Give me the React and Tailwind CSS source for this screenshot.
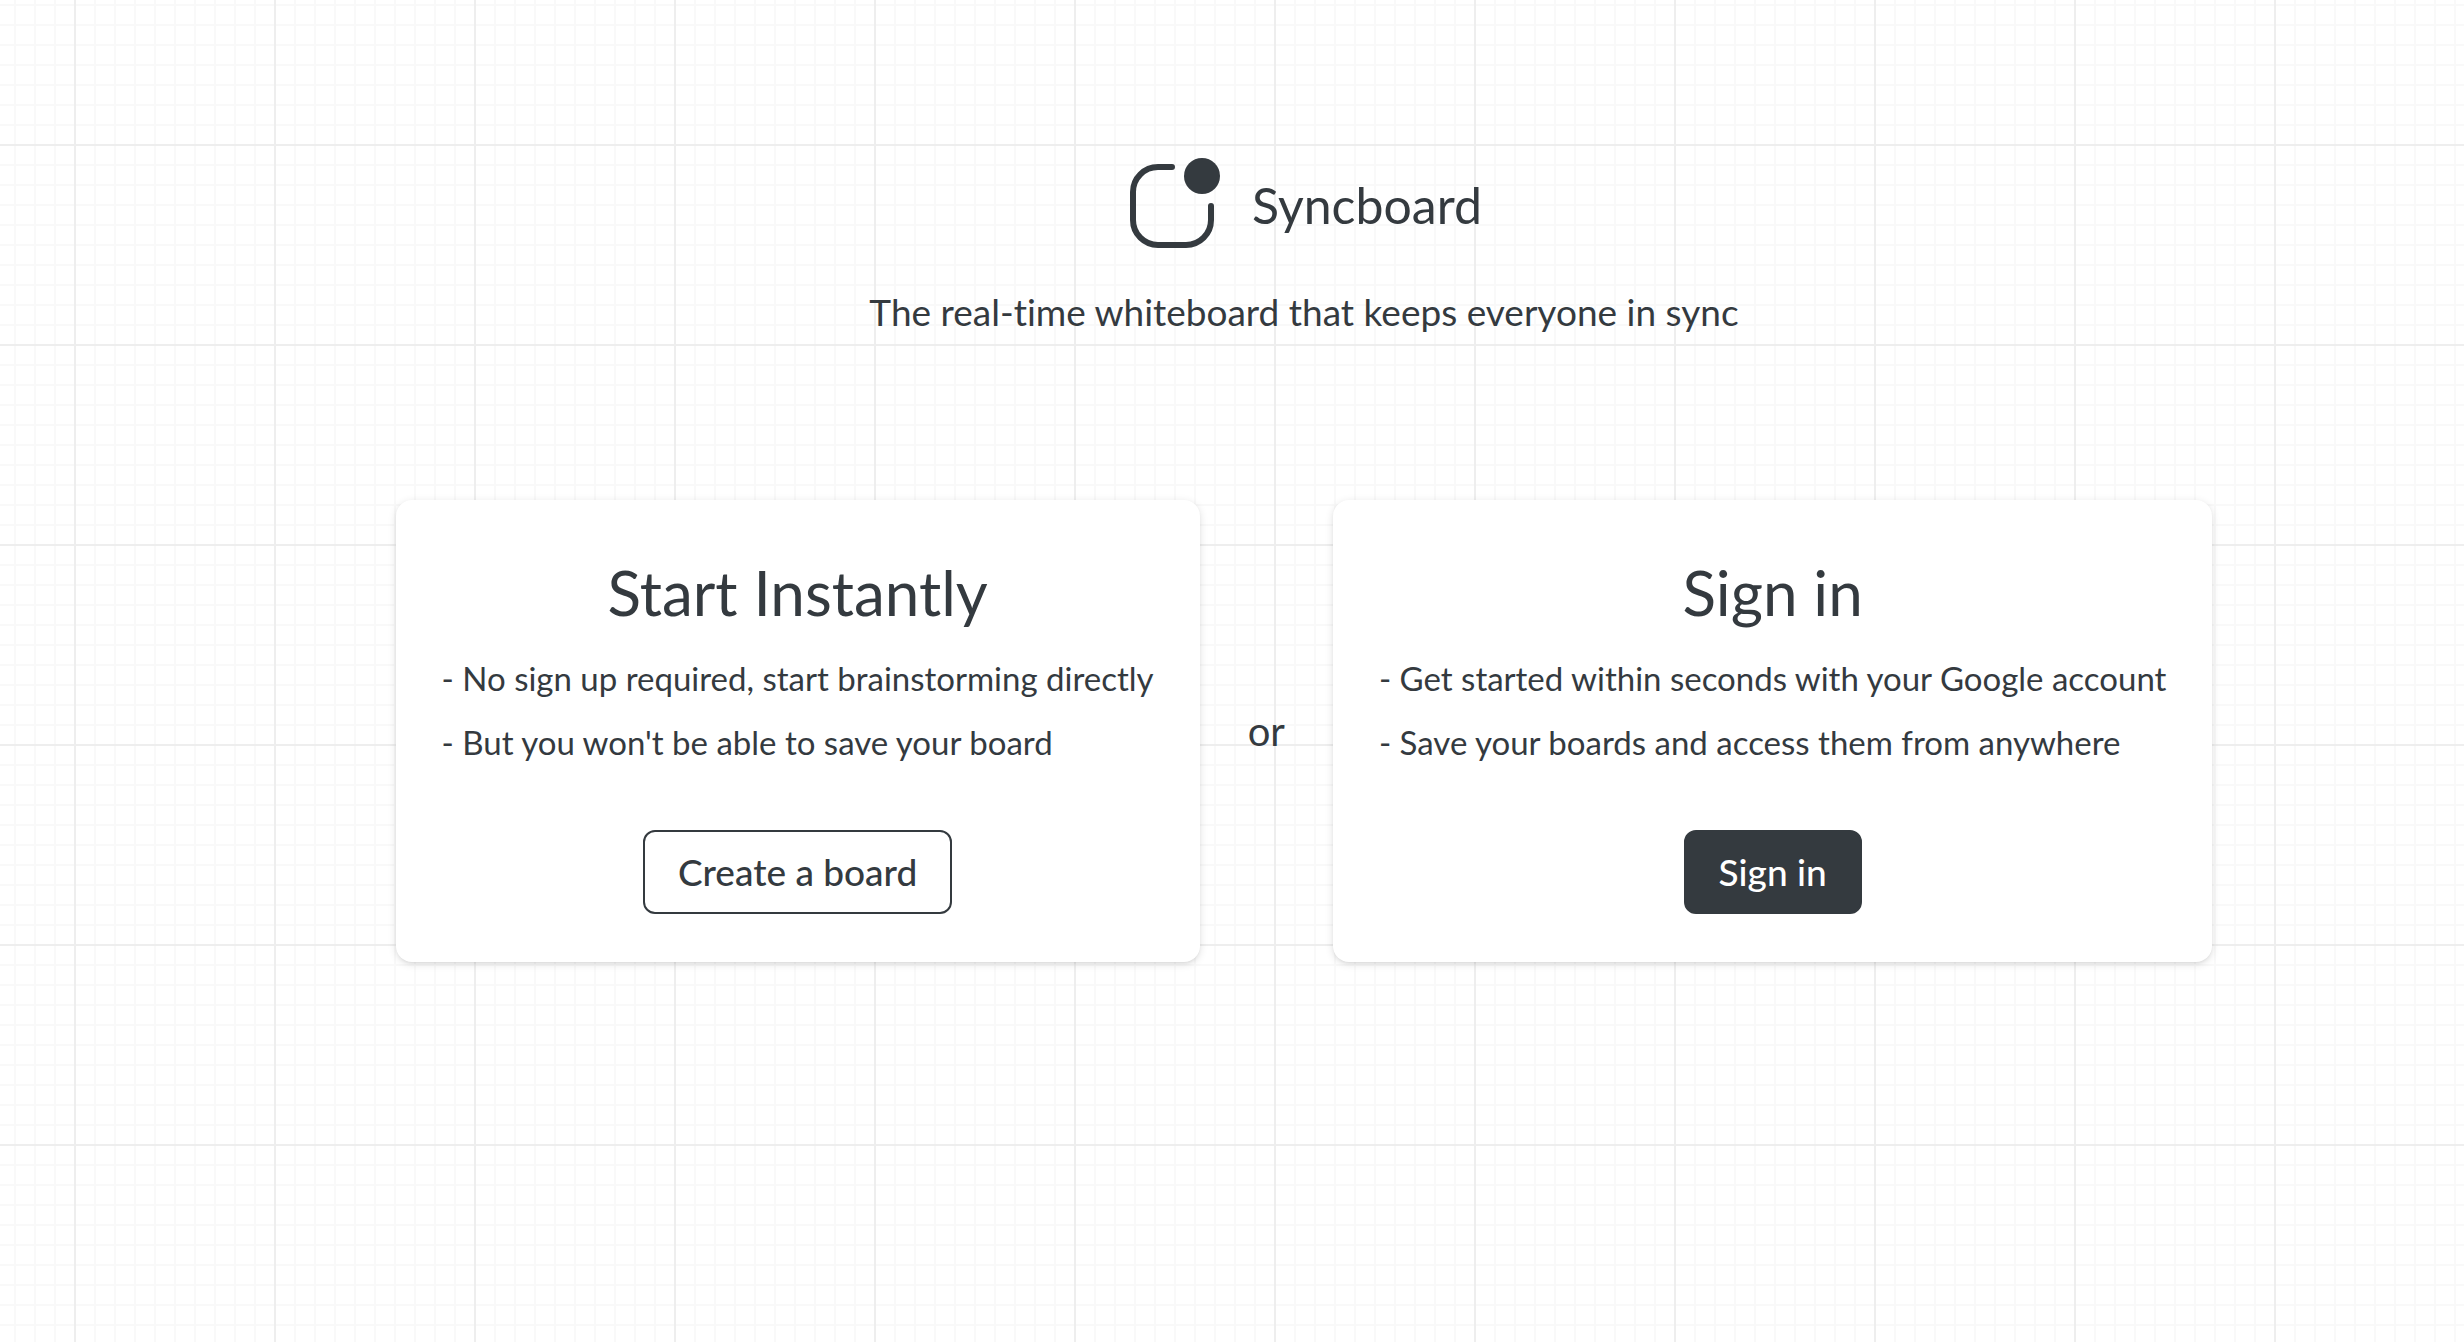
import React from "react";

function Logo() {
  return (
    <svg
      viewBox="0 0 90 90"
      className="h-[90px] w-[90px] shrink-0"
      fill="none"
      aria-hidden="true"
    >
      <path
        d="M42 9H28A25 25 0 0 0 3 34V62A25 25 0 0 0 28 87H56A25 25 0 0 0 81 62V48"
        stroke="currentColor"
        strokeWidth="6"
        strokeLinecap="round"
      />
      <circle cx="72" cy="18" r="18" fill="currentColor" />
    </svg>
  );
}

function Card({ title, points, children }) {
  return (
    <section className="flex flex-col items-center rounded-2xl bg-white px-[46px] pt-[50px] pb-12 shadow-[0_2px_8px_rgba(0,0,0,0.12),0_2px_4px_-2px_rgba(0,0,0,0.12)]">
      <h2 className="text-[62px] leading-[84px]">{title}</h2>
      <ul className="mt-5 flex flex-col gap-4 self-stretch text-[33px] leading-[48px]">
        {points.map((point) => (
          <li key={point}>- {point}</li>
        ))}
      </ul>
      <div className="mt-16 flex">{children}</div>
    </section>
  );
}

export default function App() {
  return (
    <main className="min-h-screen bg-white bg-[linear-gradient(to_right,#eeeeee_2px,transparent_2px),linear-gradient(to_bottom,#eeeeee_2px,transparent_2px),linear-gradient(to_right,#f9f9f9_2px,transparent_2px),linear-gradient(to_bottom,#f9f9f9_2px,transparent_2px)] bg-[length:200px_200px,200px_200px,20px_20px,20px_20px] bg-[position:74px_144px,74px_144px,14px_4px,14px_4px] pt-[158px] pb-12 pl-36 font-['Lato','Liberation_Sans',sans-serif] text-[#343a3f] [font-variant-ligatures:none]">
      <header className="flex flex-col items-center">
        <div className="flex items-center gap-8 pl-1">
          <Logo />
          <h1 className="pt-1 text-[50px] leading-[60px]">Syncboard</h1>
        </div>
        <p className="mt-10 text-[37px] leading-[48px]">
          The real-time whiteboard that keeps everyone in sync
        </p>
      </header>

      <div className="mt-[164px] flex items-center justify-center gap-12">
        <Card
          title="Start Instantly"
          points={[
            "No sign up required, start brainstorming directly",
            "But you won't be able to save your board",
          ]}
        >
          <button
            type="button"
            className="rounded-xl border-2 border-[#343a3f] bg-white px-[33px] py-4 text-[37px] leading-[48px] font-medium"
          >
            Create a board
          </button>
        </Card>
        <span className="text-[40px] leading-[48px]">or</span>
        <Card
          title="Sign in"
          points={[
            "Get started within seconds with your Google account",
            "Save your boards and access them from anywhere",
          ]}
        >
          <button
            type="button"
            className="rounded-xl border-2 border-[#343a3f] bg-[#343a3f] px-[33px] py-4 text-[37px] leading-[48px] font-medium text-white"
          >
            Sign in
          </button>
        </Card>
      </div>
    </main>
  );
}
